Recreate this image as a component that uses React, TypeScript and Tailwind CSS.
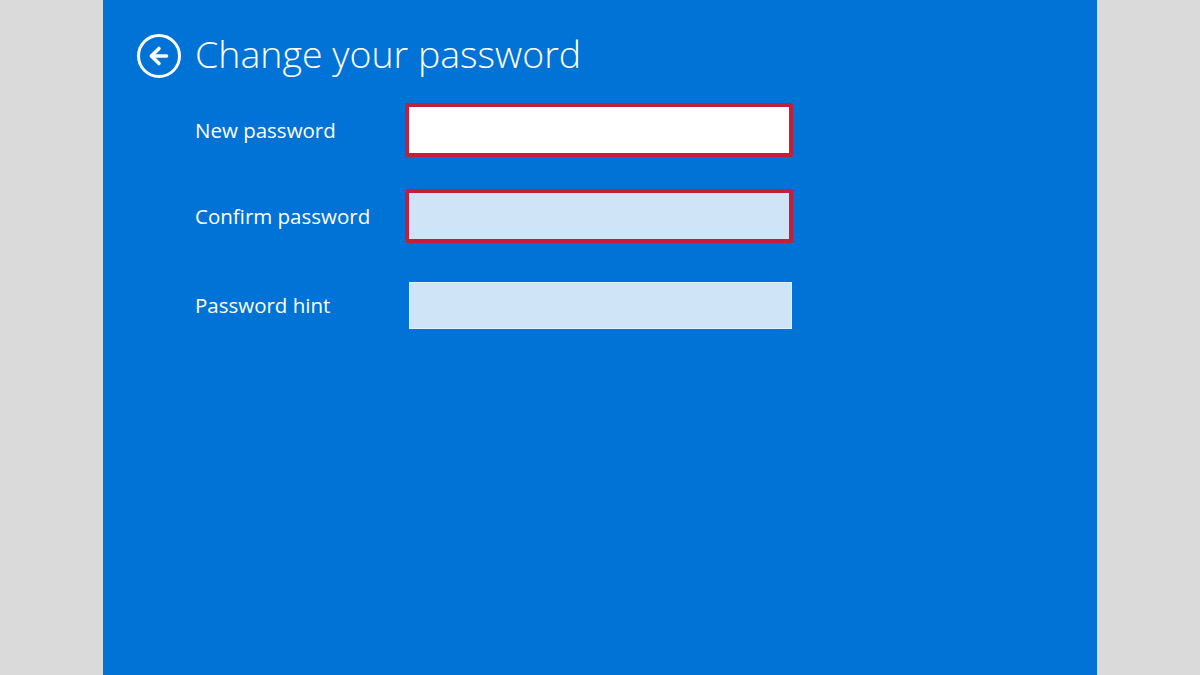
import { ArrowLeft } from 'lucide-react'

interface Field {
  label: string
  error: boolean
  filled: boolean
}

const fields: Field[] = [
  { label: 'New password', error: true, filled: true },
  { label: 'Confirm password', error: true, filled: false },
  { label: 'Password hint', error: false, filled: false }
]

export default function App() {
  return (
    <div className="w-[1200px] h-[675px] bg-[#dadada] flex justify-center overflow-hidden" style={{ fontFamily: '"Open Sans", "Noto Sans", sans-serif' }}>
      <div className="w-[994px] h-full bg-[#0173d6] pl-[34px] pt-[34px]">
        {/* Header */}
        <div className="flex items-center">
          <button className="w-[44px] h-[44px] rounded-full border-[3px] border-white flex items-center justify-center text-white">
            <ArrowLeft className="w-[26px] h-[26px]" strokeWidth={3.2} />
          </button>
          <h1 className="ml-[14px] -mt-[4px] text-[37.5px] leading-[44px] text-white font-light">
            Change your password
          </h1>
        </div>

        {/* Form */}
        <div className="mt-[25px] ml-[58px] flex flex-col">
          {fields.map((field, i) => (
            <div key={field.label} className={i === 0 ? 'flex items-center' : i === 1 ? 'flex items-center mt-[32px]' : 'flex items-center mt-[39px]'}>
              <label className="w-[210px] text-[20.5px] text-white">{field.label}</label>
              {field.error ? (
                <div className="w-[388px] h-[54px] bg-[#c41f3a] p-[4px] rounded-[2px]">
                  <div className={field.filled ? 'w-full h-full bg-white' : 'w-full h-full bg-[#cfe4f7]'} />
                </div>
              ) : (
                <div className="w-[383px] h-[47px] ml-[4px] bg-[#cfe4f7] border border-[#e4f0fb]" />
              )}
            </div>
          ))}
        </div>
      </div>
    </div>
  )
}
